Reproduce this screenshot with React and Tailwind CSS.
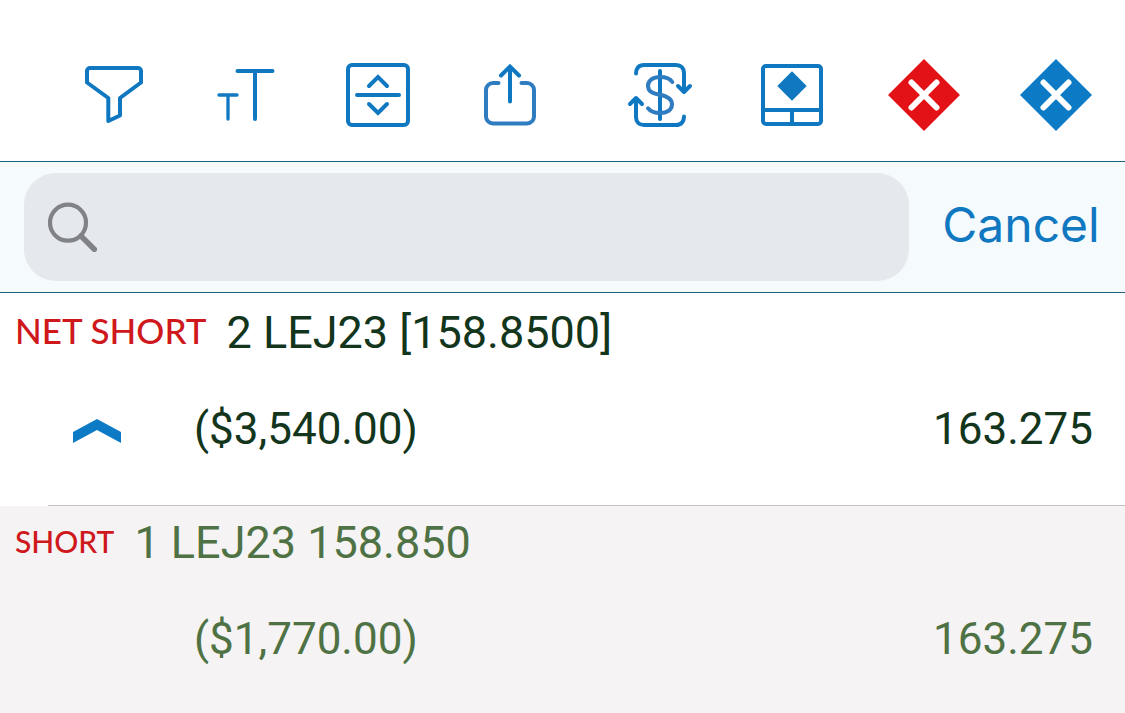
const stroke = {
  fill: "none",
  stroke: "currentColor",
  strokeWidth: 4,
  strokeLinecap: "round",
  strokeLinejoin: "round",
};

function Icon({ children }) {
  return (
    <svg viewBox="0 0 72 72" className="size-[72px]" aria-hidden="true">
      {children}
    </svg>
  );
}

function ToolButton({ label, children }) {
  return (
    <button type="button" aria-label={label} className="flex w-[132px] justify-center text-[#0f78c1]">
      <Icon>{children}</Icon>
    </button>
  );
}

function DiamondClose() {
  return (
    <>
      <path d="M36 0L72 36L36 72L0 36Z" fill="currentColor" />
      <path d="M23.5 23.5L48.5 48.5M48.5 23.5L23.5 48.5" fill="none" stroke="#fff" strokeWidth="6" strokeLinecap="round" />
    </>
  );
}

function Toolbar() {
  return (
    <header className="flex justify-between border-b border-[#1b627e] bg-white pt-[59px] pr-[3px] pb-[30px] pl-12">
      <div className="flex">
        <ToolButton label="Filter">
          <path {...stroke} d="M12 9H60a3 3 0 0 1 3 3V23.5L42 39V56.5L30.3 62V39L9 23.5V12a3 3 0 0 1 3-3Z" />
        </ToolButton>
        <ToolButton label="Text size">
          <path {...stroke} d="M27.5 12H62.5M45 12V60" />
          <path {...stroke} strokeWidth="3.3" d="M9 36H27M18 36V60" />
        </ToolButton>
        <ToolButton label="Expand rows">
          <rect {...stroke} x="6" y="6" width="60" height="60" rx="4" />
          <path {...stroke} strokeLinejoin="miter" d="M15 36H57M27 27L36 18L45 27M27 45L36 54L45 45" />
        </ToolButton>
        <ToolButton label="Share">
          <path {...stroke} stroke="#2f7cc1" d="M24.5 24H19a7 7 0 0 0-7 7V57.5a7 7 0 0 0 7 7H53a7 7 0 0 0 7-7V31a7 7 0 0 0-7-7H47.5" />
          <path {...stroke} strokeLinejoin="miter" d="M36 8V42.5M27 16.5L36 7.5L45 16.5" />
        </ToolButton>
      </div>
      <div className="flex">
        <ToolButton label="Currency">
          <path {...stroke} d="M12 14.5C12 9 15 6 20 6H52C57 6 60 9 60 14V33M54 27L60 33L66 27" />
          <path {...stroke} d="M60 57.5C60 63 57 66 52 66H20C15 66 12 63 12 58V39M6 45L12 39L18 45" />
          <path {...stroke} d="M36 12V60" />
          <path {...stroke} stroke="#2f7cc1" d="M48.3 23C46 19.5 41.5 18 36 18C29 18 24 21.5 24 27C24 33 30 34.5 36 35.8C43 37.3 48 39.5 48 45.3C48 51 43 54 36 54C31 54 26.5 52.5 24 49.3" />
        </ToolButton>
        <ToolButton label="Order panel">
          <rect {...stroke} x="7" y="7" width="58" height="58" rx="3" />
          <path {...stroke} strokeLinecap="butt" d="M7 51H65M36 51V65" />
          <path d="M36 12.3L50.7 27L36 41.7L21.3 27Z" fill="currentColor" />
        </ToolButton>
        <button type="button" aria-label="Close position" className="flex w-[132px] justify-center text-[#e31216]">
          <Icon><DiamondClose /></Icon>
        </button>
        <button type="button" aria-label="Cancel orders" className="flex w-[132px] justify-center text-[#0c7ac5]">
          <Icon><DiamondClose /></Icon>
        </button>
      </div>
    </header>
  );
}

function SearchBar() {
  return (
    <form role="search" className="flex items-center border-b border-[#1b627e] bg-[#f5fafd] py-[11px] pl-6">
      <label className="flex h-[108px] min-w-0 flex-1 items-center rounded-[32px] bg-[#e5e8ed] pl-6">
        <svg viewBox="0 0 50 50" className="size-[50px] shrink-0 text-[#808287]" aria-hidden="true">
          <circle cx="20" cy="20.7" r="18" fill="none" stroke="currentColor" strokeWidth="4.2" />
          <path d="M33 34L46.3 47.3" stroke="currentColor" strokeWidth="5.5" strokeLinecap="round" />
        </svg>
        <input
          type="text"
          aria-label="Search"
          className="h-full min-w-0 flex-1 bg-transparent px-4 font-['Inter',sans-serif] text-[48px] text-[#12351c] outline-none"
        />
      </label>
      <button type="button" className="w-[216px] pb-1 pl-2 text-center font-['Inter',sans-serif] text-[48px] leading-[60px] text-[#0f78c1]">
        Cancel
      </button>
    </form>
  );
}

function Chevron() {
  return (
    <button type="button" aria-label="Collapse" className="pt-1 text-[#0c7ac5]">
      <svg viewBox="0 0 48 24" className="block h-6 w-12" aria-hidden="true">
        <path d="M24 0L48 13V24L24 11L0 24V13Z" fill="currentColor" />
      </svg>
    </button>
  );
}

function Position({ side, sideClass, title, profit, price, className, open }) {
  return (
    <section className={className}>
      <h2 className="flex items-start gap-5 pl-[15px] text-[45px] leading-[60px]">
        <span className={sideClass}>{side}</span>
        <span>{title}</span>
      </h2>
      <div className="mt-9 flex items-center pr-8 text-[44px] leading-[60px]">
        <div className="flex w-[194px] items-center justify-center">{open && <Chevron />}</div>
        <span className="flex-1">{profit}</span>
        <span>{price}</span>
      </div>
    </section>
  );
}

export default function App() {
  return (
    <div className="min-h-screen bg-[#f5f3f4] font-['Roboto',sans-serif]">
      <Toolbar />
      <SearchBar />
      <main>
        <Position
          side="NET SHORT"
          sideClass="font-['Lato',sans-serif] text-[35px] leading-[54px] font-medium text-[#cf181c]"
          title="2 LEJ23 [158.8500]"
          profit="($3,540.00)"
          price="163.275"
          open
          className="bg-white pt-[10px] pb-[46px] text-[#12351c]"
        />
        <div className="bg-white pl-12">
          <hr className="border-[#c0c2c0]" />
        </div>
        <Position
          side="SHORT"
          sideClass="font-['Lato',sans-serif] text-[30px] leading-[56px] font-medium text-[#cf181c]"
          title="1 LEJ23 158.850"
          profit="($1,770.00)"
          price="163.275"
          className="pt-[7px] pb-[43px] text-[#4f7244]"
        />
      </main>
    </div>
  );
}
